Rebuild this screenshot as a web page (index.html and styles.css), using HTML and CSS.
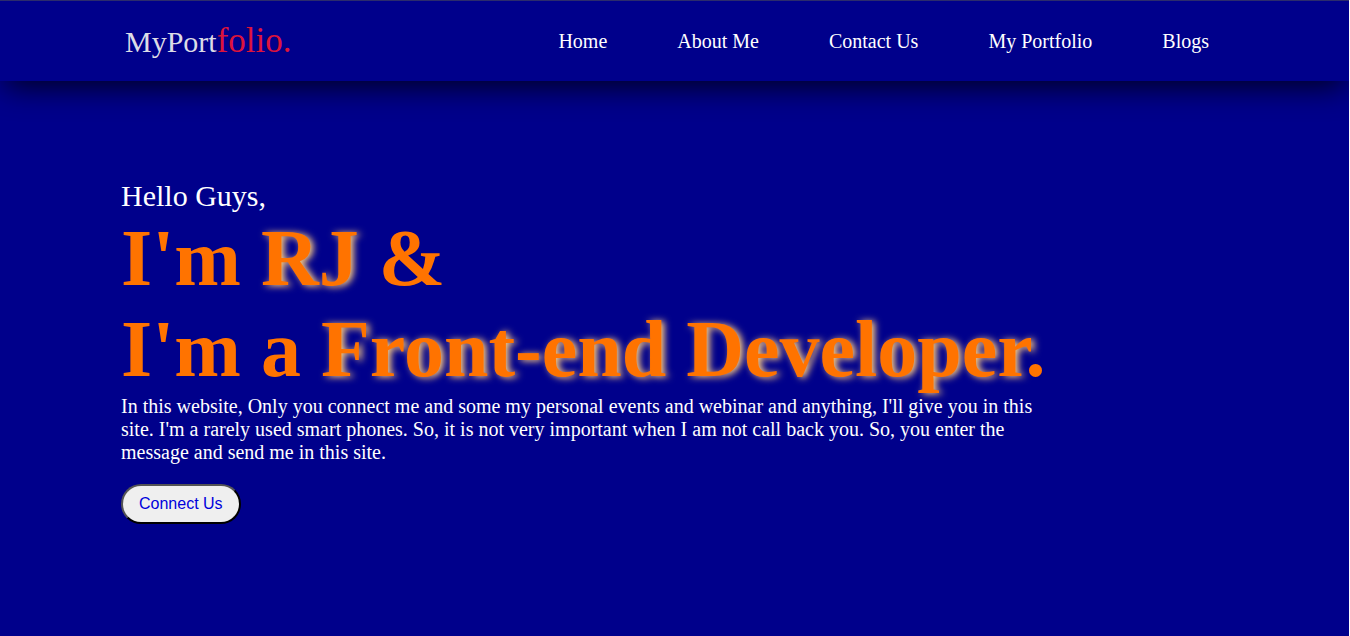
FILE: index.html
```html
<!DOCTYPE html>
<html lang="en">
<head>
<meta charset="utf-8">
<title>MyPortfolio</title>
<link rel="stylesheet" href="styles.css">
</head>
<body>
<header class="navbar">
  <a class="logo" href="#home">MyPort<span class="logo-accent">folio.</span></a>
  <nav class="menu">
    <a href="#home">Home</a>
    <a href="#about">About Me</a>
    <a href="#contact">Contact Us</a>
    <a href="#portfolio">My Portfolio</a>
    <a href="#blogs">Blogs</a>
  </nav>
</header>
<main class="hero" id="home">
  <p class="greeting">Hello Guys,</p>
  <h1 class="title">I'm <span class="glow">RJ</span> &amp;<br>I'm a <span class="glow">Front-end Developer</span>.</h1>
  <p class="intro">In this website, Only you connect me and some my personal events and webinar and anything, I'll give you in this site. I'm a rarely used smart phones. So, it is not very important when I am not call back you. So, you enter the message and send me in this site.</p>
  <button class="connect" type="button">Connect Us</button>
</main>
</body>
</html>
```
FILE: styles.css
```css
* {
  margin: 0;
  padding: 0;
  box-sizing: border-box;
}

body {
  min-height: 100vh;
  border-right: 1px solid white;
  background: darkblue;
  color: white;
  font-family: "Liberation Serif", "Times New Roman", serif;
}

.navbar {
  display: flex;
  align-items: center;
  justify-content: space-between;
  height: 81px;
  padding: 0 140px 0 125px;
  border-top: 1px solid #2c2c6c;
  box-shadow: 0 10px 30px -5px rgb(0 0 0 / 80%);
}

.logo {
  color: #dcdce6;
  font-size: 30px;
  text-decoration: none;
}

.logo-accent {
  color: crimson;
  font-size: 35px;
}

.menu {
  display: flex;
  gap: 70px;
}

.menu a {
  color: white;
  font-size: 20px;
  text-decoration: none;
}

.hero {
  max-width: 1050px;
  padding: 98px 0 0 121px;
}

.greeting {
  font-size: 30px;
}

.title {
  color: #ff7300;
  font-size: 80px;
  line-height: 91px;
}

.glow {
  text-shadow: 3px 1px 7px #ffcf80;
}

.intro {
  font-size: 20px;
  line-height: 23px;
}

.connect {
  margin-top: 20px;
  padding: 9px 16px;
  border: 2px outset black;
  border-radius: 20px;
  background: #efefef;
  color: #0000dc;
  font-family: "Liberation Sans", Arial, sans-serif;
  font-size: 16px;
}
```
